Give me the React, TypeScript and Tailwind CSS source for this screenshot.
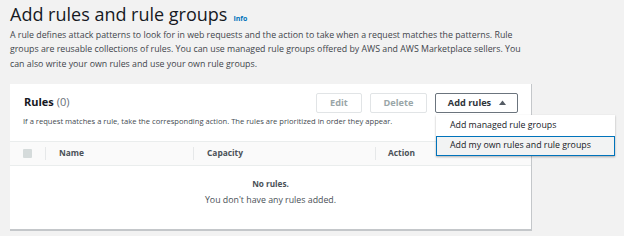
import React from "react";

export default function App() {
  const font = { fontFamily: '"Open Sans", "Noto Sans", sans-serif' };
  return (
    <div className="w-[624px] h-[236px] bg-[#f2f2f2] overflow-hidden relative" style={font}>
      <div className="pl-[10px] pt-[2px]">
        <div className="flex items-baseline gap-[6px] h-[24px]">
          <h1 className="text-[18px] leading-[24px] text-[#16191f] font-normal">Add rules and rule groups</h1>
          <span className="text-[7px] font-bold text-[#0073bb]">Info</span>
        </div>
        <p className="text-[8.8px] leading-[14.6px] text-[#3f454b] w-[512px] mt-[1.6px]">
          A rule defines attack patterns to look for in web requests and the action to take when a request matches the patterns. Rule groups are reusable collections of rules. You can use managed rule groups offered by AWS and AWS Marketplace sellers. You can also write your own rules and use your own rule groups.
        </p>
      </div>
      <div className="ml-[10px] mt-[12.2px] w-[522px] h-[147px] bg-white border-r border-b-2 border-[#c4c7ca] flex flex-col">
        <div className="flex items-center pl-[14px] pr-[13px] pt-[9px]">
          <div className="text-[11px] font-bold text-[#16191f]">Rules <span className="font-normal text-[#687078]">(0)</span></div>
          <div className="ml-auto flex gap-[8px]">
            <button className="w-[46px] h-[20px] border border-[#e1e4e6] rounded-[2px] text-[9.2px] font-bold text-[#9aa6a8] leading-none">Edit</button>
            <button className="w-[57px] h-[20px] border border-[#e1e4e6] rounded-[2px] text-[9.2px] font-bold text-[#9aa6a8] leading-none">Delete</button>
            <button className="w-[83px] h-[20px] border border-[#6b747d] rounded-[2px] text-[9.2px] font-bold text-[#2f353b] leading-none flex items-center justify-center gap-[8px] pl-[1px]">
              Add rules
              <svg width="7" height="5" viewBox="0 0 7 5"><path d="M0 5 L3.5 0.5 L7 5 Z" fill="#545b64" /></svg>
            </button>
          </div>
        </div>
        <div className="pl-[13px] text-[7.6px] leading-[10px] text-[#444a50] mt-[3.3px]">If a request matches a rule, take the corresponding action. The rules are prioritized in order they appear.</div>
        <div className="mt-[14.7px] h-[25px] bg-[#fafafa] border-t border-b border-[#eaeded] flex items-center text-[8.4px] font-bold text-[#4a5157]">
          <div className="w-[35px] flex justify-start pl-[13px]"><div className="w-[9px] h-[9px] bg-[#d5dbdb] rounded-[1px]" /></div>
          <div className="w-px h-[13px] bg-[#e6e8e9]" />
          <div className="w-[147px] pl-[13px]">Name</div>
          <div className="w-px h-[13px] bg-[#e6e8e9]" />
          <div className="w-[181px] pl-[13px]">Capacity</div>
          <div className="w-px h-[13px] bg-[#e6e8e9]" />
          <div className="pl-[12px]">Action</div>
        </div>
        <div className="flex flex-col items-center pt-[10px] text-[#4a5157] leading-[16.6px]">
          <div className="font-bold text-[8.2px]">No rules.</div>
          <div className="text-[8.8px]">You don't have any rules added.</div>
        </div>
      </div>
      <div className="absolute left-[436px] top-[115px] w-[179px] bg-white shadow-[0_1px_2px_rgba(0,0,0,0.3)] text-[8.8px] text-[#16191f]">
        <div className="h-[21px] flex items-center pl-[14px]">Add managed rule groups</div>
        <div className="h-[20px] flex items-center pl-[13px] border border-[#0073bb] bg-[#f2f3f3]">Add my own rules and rule groups</div>
      </div>
    </div>
  );
}
